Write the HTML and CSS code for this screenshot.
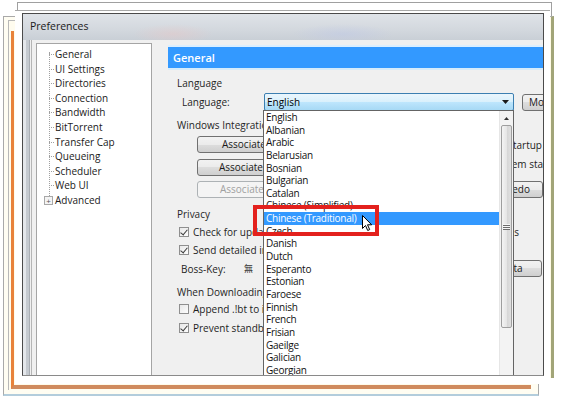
FILE: index.html
```html
<!DOCTYPE html>
<html lang="en">
<head>
<meta charset="utf-8">
<title>Preferences</title>
<link rel="stylesheet" href="styles.css">
</head>
<body>
<div class="stage">
  <div class="sheet sheet-b"></div>
  <div class="sheet sheet-b2"></div>
  <div class="sheet sheet-c"></div>
  <div class="sheet sheet-a"></div>
  <div class="sheet sheet-d"></div>
  <div class="photo">
    <div class="shot">
      <div class="titlebar">Preferences</div>
      <div class="frame">
        <div class="client">
          <ul class="tree">
            <li>General</li>
            <li>UI Settings</li>
            <li>Directories</li>
            <li>Connection</li>
            <li>Bandwidth</li>
            <li>BitTorrent</li>
            <li>Transfer Cap</li>
            <li>Queueing</li>
            <li>Scheduler</li>
            <li>Web UI</li>
            <li class="expand"><span class="plus">+</span>Advanced</li>
          </ul>
          <div class="panel">
            <div class="panel-head">General</div>
            <div class="panel-body">
              <div class="glabel g-lang">Language</div>
              <div class="lang-row">
                <span class="lang-label">Language:</span>
                <div class="combo"><span>English</span>
                  <svg class="combo-arrow" width="7" height="4" viewBox="0 0 7 4"><path d="M0 0h7L3.5 4z" fill="#1a1a1a"/></svg>
                </div>
                <div class="btn more">More...</div>
              </div>

              <div class="glabel g-wi">Windows Integration</div>
              <div class="row wi1">
                <div class="btn assoc">Associate with .torrent files</div>
                <div class="chk r-assoc"><span class="box on"></span>Check association on startup</div>
              </div>
              <div class="row wi2">
                <div class="btn assoc a2">Associate with magnet URIs</div>
                <div class="chk r-start"><span class="box"></span>Start µTorrent on system startup</div>
              </div>
              <div class="row wi3">
                <div class="btn assoc a3 disabled">Associate with .btsearch files</div>
                <div class="btn r-teredo">Install Teredo</div>
              </div>

              <div class="glabel g-priv">Privacy</div>
              <div class="row p1">
                <div class="chk"><span class="box on"></span>Check for updates automatically</div>
                <div class="chk r-beta"><span class="box"></span>Update to beta versions</div>
              </div>
              <div class="row p2">
                <div class="chk"><span class="box on"></span>Send detailed info when checking for updates</div>
              </div>
              <div class="row p3">
                <div class="boss"><span class="boss-label">Boss-Key:</span><span class="hotkey">無</span></div>
                <div class="btn r-clear">Clear Private Data</div>
              </div>

              <div class="glabel g-dl">When Downloading</div>
              <div class="row d1">
                <div class="chk"><span class="box"></span>Append .!bt to incomplete files</div>
              </div>
              <div class="row d2">
                <div class="chk"><span class="box on"></span>Prevent standby if active torrents</div>
              </div>
            </div>
          </div>

          <div class="droplist">
            <ul class="items">
              <li>English</li>
              <li>Albanian</li>
              <li>Arabic</li>
              <li>Belarusian</li>
              <li>Bosnian</li>
              <li>Bulgarian</li>
              <li>Catalan</li>
              <li>Chinese (Simplified)</li>
              <li class="sel">Chinese (Traditional)</li>
              <li>Czech</li>
              <li>Danish</li>
              <li>Dutch</li>
              <li>Esperanto</li>
              <li>Estonian</li>
              <li>Faroese</li>
              <li>Finnish</li>
              <li>French</li>
              <li>Frisian</li>
              <li>Gaeilge</li>
              <li>Galician</li>
              <li>Georgian</li>
              <li>German</li>
            </ul>
            <div class="scrollbar">
              <div class="sb-up"><svg width="5" height="3" viewBox="0 0 5 3"><path d="M0 3h5L2.5 0z" fill="#333"/></svg></div>
              <div class="sb-thumb"><span class="grip"></span></div>
              <div class="sb-track"></div>
            </div>
          </div>
        </div>
      </div>
    </div>
  </div>
  <div class="mark"></div>
  <svg class="cursor" width="11" height="17" viewBox="0 0 11 17"><path d="M0.5 0.5v13l3-3 2.2 5 2-0.9-2.2-4.8h4.2z" fill="#fff" stroke="#000" stroke-width="1"/></svg>
</div>
</body>
</html>
```

FILE: styles.css
```css
* { box-sizing: border-box; margin: 0; padding: 0; }
body { margin: 0; background: #fff; font-family: "Open Sans", "Noto Sans", sans-serif; font-size: 10px; color: #1e1e1e; }
ul { list-style: none; }

.stage { position: relative; width: 563px; height: 397px; overflow: hidden; background: #fff; }

/* stacked paper sheets behind the screenshot */
.sheet { position: absolute; }
.sheet-b { left: 3px; top: 16px; width: 536px; height: 380px; border: 1px solid #a9a9a9; border-bottom: 2px solid #b3cddc; background: #fffdf2; }
.sheet-b2 { left: 8px; top: 20px; width: 520px; height: 370px; border-left: 1px solid #b8b8b8; border-top: 1px solid #b8b8b8; background: #fffcef; }
.sheet-c { left: 11px; top: 31px; width: 520px; height: 358px; border-left: 3px solid #e8823a; border-bottom: 4px solid #d08b5e; background: #fffbea; }
.sheet-a { left: 17px; top: 2px; width: 535px; height: 14px; border: 1px solid #a0a0a0; border-bottom: none; background: #fff; }
.sheet-d { left: 300px; top: 16px; width: 254px; height: 362px; border-right: 3px solid #a2a578; border-top: 1px solid #b0b0b0; background: #fffbe6; }

.photo { position: absolute; left: 15px; top: 10px; width: 535px; height: 374px; background: #fff; border-top: 1px solid #a8a8a8; padding: 2px 0 0 7px; }

.shot { width: 522px; height: 363px; border: 1px solid #4a4a4a; border-bottom-color: #8a8a8a; display: flex; flex-direction: column; overflow: hidden; background: #f0f0f0; }

.titlebar { height: 26px; flex: none; line-height: 25px; padding-left: 7px; color: #1a1a1a; font-size: 10.5px;
  background:
    radial-gradient(ellipse 40px 10px at 150px 20px, rgba(230,200,200,0.5), transparent),
    radial-gradient(ellipse 50px 10px at 320px 20px, rgba(190,200,230,0.5), transparent),
    linear-gradient(#dfe3e8, #d3d8de 60%, #c9cfd6); }

.frame { flex: 1; display: flex; min-height: 0;
  background: linear-gradient(to right, #e4e7eb 0, #e4e7eb 3px, #c5cad0 3px, #c5cad0 6px, #a9aeb4 6px, #a9aeb4 7px, #f0f0f0 7px); padding-left: 8px; }

.client { position: relative; flex: 1; display: flex; align-items: flex-start; background: #f0f0f0; overflow: hidden; padding: 3px 0 0 4px; border-left: 1px solid #b5b5b5; }

/* tree */
.tree { flex: none; width: 116px; height: 340px; background: #fff; border: 1px solid #a5a5a5; padding: 3px 0 0 18px; position: relative; }
.tree::before { content: ""; position: absolute; left: 12px; top: 8px; height: 148px; border-left: 1px dotted #a0a0a0; }
.tree li { line-height: 14.6px; height: 14.6px; position: relative; white-space: nowrap; color: #1a1a1a; }
.tree li::before { content: ""; position: absolute; left: -6px; top: 7px; width: 5px; border-top: 1px dotted #a0a0a0; }
.tree li.expand::before { display: none; }
.plus { position: absolute; left: -11px; top: 3px; width: 9px; height: 9px; border: 1px solid #a8a8a8; background: #f4f4f4; font-size: 8px; line-height: 7px; text-align: center; color: #555; }

/* right panel */
.panel { flex: none; width: 403px; margin-left: 16px; margin-top: 2px; }
.panel-head { height: 25px; border-top: 2px solid #dcefff; border-bottom: 2px solid #d6ecfb; background: #3399ff; color: #fff; font-weight: 600; font-size: 11px; line-height: 21px; padding-left: 5px; }
.panel-body { padding-left: 9px; }

.glabel { height: 14px; line-height: 14px; color: #262626; white-space: nowrap; }
.g-lang { margin-top: 6px; }
.g-wi { margin-top: 7px; }
.g-priv { margin-top: 9px; }
.g-dl { margin-top: 8px; }

.lang-row { display: flex; align-items: center; margin-top: 3px; height: 18px; padding-left: 5px; }
.lang-label { flex: 0 0 82px; }
.combo { flex: 0 0 250px; height: 18px; border: 1px solid #3c7fb1; border-radius: 2px; background: linear-gradient(#eaf6fd, #d9f0fc 50%, #bee6fd 50%, #a7d9f5); display: flex; align-items: center; justify-content: space-between; padding: 0 4px 0 2px; }
.combo span { color: #000; }
.more { margin-left: 8px; flex: none; width: 60px; }

.btn { height: 17px; line-height: 15px; border: 1px solid #707070; border-radius: 3px; background: linear-gradient(#f2f2f2, #ebebeb 50%, #dddddd 50%, #cfcfcf); white-space: nowrap; padding: 0 6px; color: #1a1a1a; }
.btn.disabled { border-color: #adb2b5; background: #f4f4f4; color: #a0a0a0; }

.row { display: flex; justify-content: space-between; align-items: center; }
.wi1 { margin-top: 4px; }
.wi2, .wi3 { margin-top: 4px; }
.assoc { margin-left: 20px; width: 170px; padding-left: 24px; }
.a2 { padding-left: 21px; }
.a3 { padding-left: 22px; }

.chk { display: flex; align-items: center; height: 14px; line-height: 14px; white-space: nowrap; padding-left: 2px; }
.box { flex: none; width: 10px; height: 10px; border: 1px solid #8f8f8f; background: linear-gradient(135deg, #e8e8e8, #fdfdfd); margin-right: 4px; position: relative; }
.box.on::after { content: ""; position: absolute; left: 2px; top: 0px; width: 3px; height: 6px; border-right: 1.5px solid #3b3b3b; border-bottom: 1.5px solid #3b3b3b; transform: rotate(40deg); }

.r-assoc { margin-right: 29px; }
.r-start { margin-right: 8px; margin-bottom: 6px; }
.r-teredo { margin-right: 28px; width: 90px; text-align: right; padding-right: 12px; }

.p1 { margin-top: 4px; height: 14px; }
.p2 { margin-top: 4px; height: 14px; }
.p3 { margin-top: 3px; height: 17px; }
.r-beta { margin-right: 52px; }
.r-clear { margin-right: 29px; width: 110px; text-align: right; padding-right: 20px; }

.boss { display: flex; align-items: center; padding-left: 4px; }
.boss-label { flex: 0 0 63px; }
.hotkey { font-family: "Noto Sans CJK TC", "Noto Sans CJK SC", sans-serif; font-size: 9px; color: #333; }

.d1 { margin-top: 3px; }
.d2 { margin-top: 5px; }

/* open dropdown list */
.droplist { position: absolute; left: 231px; top: 70px; width: 251px; height: 300px; background: #fff; border: 1px solid #646464; display: flex; }
.items { flex: 1; padding-top: 0; }
.items li { height: 12.65px; line-height: 12.65px; padding-left: 2px; white-space: nowrap; color: #111; letter-spacing: -0.25px; }
.items li.sel { background: #3399ff; color: #fff; }
.scrollbar { flex: none; width: 14px; display: flex; flex-direction: column; background: #f3f3f3; border-left: 1px solid #e6e6e6; }
.sb-up { height: 14px; display: flex; align-items: center; justify-content: center; }
.sb-thumb { height: 203px; margin: 0 1px; border: 1px solid #9e9e9e; border-radius: 2px; background: linear-gradient(to right, #f4f4f4, #e6e6e6 50%, #d5d5d5 51%, #e0e0e0); display: flex; align-items: center; justify-content: center; }
.grip { width: 7px; height: 6px; background: repeating-linear-gradient(#f8f8f8 0, #f8f8f8 1px, #6d6d6d 1px, #6d6d6d 2px); }
.sb-track { flex: 1; }

/* annotation overlay */
.mark { position: absolute; left: 253px; top: 205px; width: 126px; height: 31px; border: 4px solid #e3211d; }
.cursor { position: absolute; left: 362px; top: 215px; }
```
